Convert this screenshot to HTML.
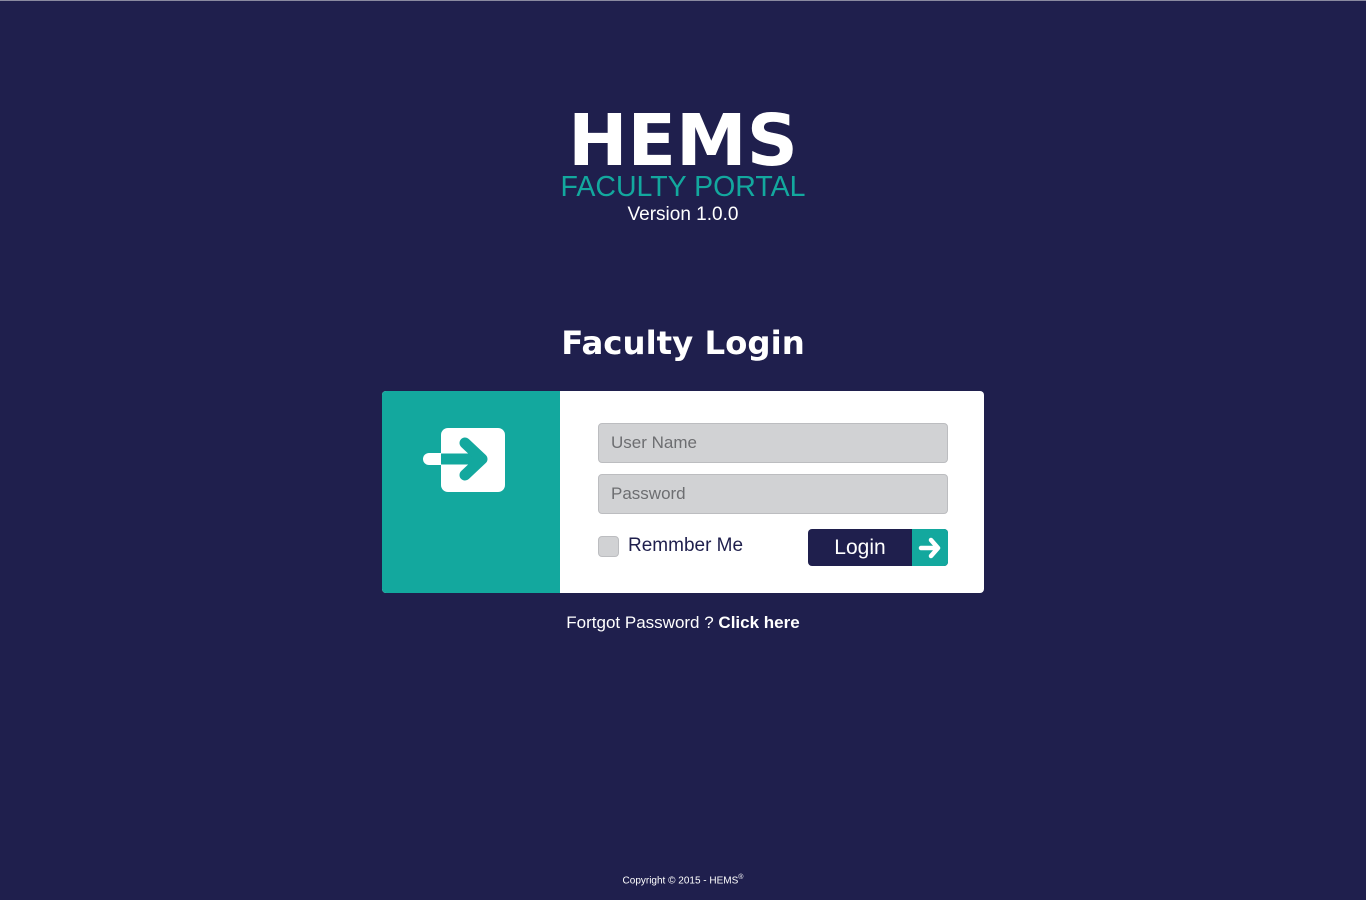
<!DOCTYPE html>
<html><head><style>
*{margin:0;padding:0;box-sizing:border-box}
body{width:1366px;height:900px;background:#1f1f4d;font-family:"Liberation Sans",sans-serif;position:relative;overflow:hidden;border-top:1px solid #8a8aa0}
.a{position:absolute;left:0;width:1366px;text-align:center;color:#fff;white-space:nowrap}
.hems{top:100px;font-family:"DejaVu Sans",sans-serif;font-weight:bold;font-size:71px;line-height:80px}
.fp{top:170px;font-size:28.5px;color:#13a89e;line-height:32px}
.ver{top:203px;font-size:19px;line-height:22px}
.fl{top:322px;font-family:"DejaVu Sans",sans-serif;font-weight:bold;font-size:32.4px;line-height:40px}
.card{position:absolute;left:382px;top:390px;width:602px;height:202px;background:#fff;border-radius:4px;overflow:hidden}
.side{position:absolute;left:0;top:0;width:178px;height:202px;background:#13a89e}
.inp{position:absolute;left:216px;width:350px;height:40px;background:#d1d2d4;border:1px solid #bcbdc0;border-radius:4px;color:#6d6e71;font-size:17px;padding-left:12px;line-height:38px}
.cb{position:absolute;left:216px;top:145px;width:21px;height:21px;background:#d1d2d4;border:1px solid #bcbdc0;border-radius:4px}
.rm{position:absolute;left:246px;top:144px;font-size:19px;color:#1f1f4d}
.btn{position:absolute;left:426px;top:138px;width:140px;height:37px;background:#1f1f4d;border-radius:4px;overflow:hidden}
.btn span{position:absolute;left:0;width:104px;text-align:center;color:#fff;font-size:21px;line-height:37px}
.btn i{position:absolute;left:104px;top:0;width:36px;height:37px;background:#13a89e}
.fg{top:611px;font-size:17px;line-height:22px}
.cp{top:873px;font-size:10px}
</style></head><body>
<div class="a hems">HEMS</div>
<div class="a fp">FACULTY PORTAL</div>
<div class="a ver">Version 1.0.0</div>
<div class="a fl">Faculty Login</div>
<div class="card">
<div class="side">
<svg width="178" height="202" style="position:absolute;left:0;top:0">
<rect x="59" y="37" width="64" height="64" rx="7" fill="#fff"/>
<path d="M47 68H62" stroke="#fff" stroke-width="12" stroke-linecap="round"/>
<path d="M59 68H100" stroke="#13a89e" stroke-width="11"/>
<path d="M83 52L100 68L83 84" stroke="#13a89e" stroke-width="11" fill="none" stroke-linecap="round" stroke-linejoin="round"/>
</svg>
</div>
<div class="inp" style="top:32px">User Name</div>
<div class="inp" style="top:83px">Password</div>
<div class="cb"></div>
<div class="rm">Remmber Me</div>
<div class="btn"><span>Login</span><i><svg width="36" height="37"><path d="M9 19H26M19 11L26 19L19 27" stroke="#fff" stroke-width="4.5" fill="none" stroke-linecap="round" stroke-linejoin="round"/></svg></i></div>
</div>
<div class="a fg">Fortgot Password ? <b>Click here</b></div>
<div class="a cp">Copyright © 2015 - HEMS<sup style="font-size:7px">®</sup></div>
</body></html>
